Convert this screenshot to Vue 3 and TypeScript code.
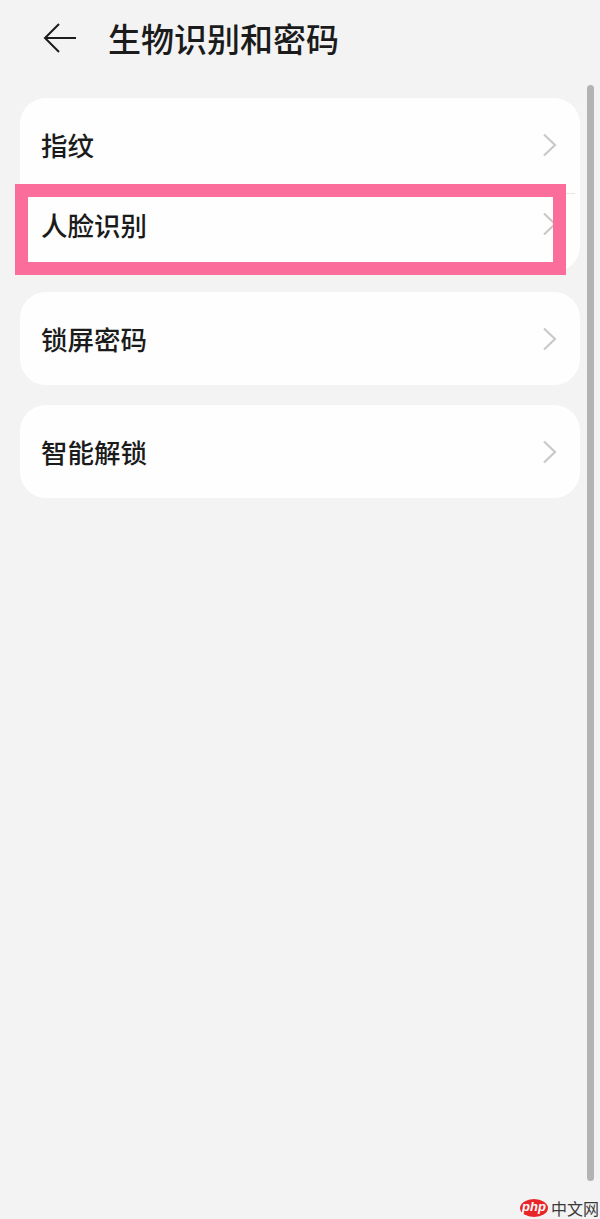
<script setup lang="ts">
const groups: string[][] = [['指纹', '人脸识别'], ['锁屏密码'], ['智能解锁']]
</script>

<template>
  <div class="screen">
    <header class="header">
      <svg class="back" width="36" height="32" viewBox="0 0 36 32" fill="none">
        <path d="M34 16H3M17 2 3 16l14 14" stroke="#1c1c1c" stroke-width="2" />
      </svg>
      <h1 class="title">生物识别和密码</h1>
    </header>

    <main class="list">
      <section v-for="(group, i) in groups" :key="i" class="card">
        <div v-for="label in group" :key="label" class="row">
          <span class="label">{{ label }}</span>
          <svg class="chevron" width="16" height="24" viewBox="0 0 16 24" fill="none">
            <path d="M2 1.5 13 12 2 22.5" stroke="#c9c9c9" stroke-width="2.2" />
          </svg>
        </div>
      </section>
    </main>

    <div class="highlight"></div>
    <div class="scrollbar"></div>

    <div class="watermark">
      <span class="php">php</span>
      <span class="cn">中文网</span>
    </div>
  </div>
</template>

<style scoped>
.screen {
  position: relative;
  width: 600px;
  height: 1219px;
  overflow: hidden;
  background: #f3f3f3;
  font-family: "Noto Sans CJK SC", "Noto Sans", sans-serif;
  color: #1b1b1b;
}

.header {
  display: flex;
  align-items: center;
  height: 76px;
  padding-left: 42px;
  gap: 30px;
}

.back {
  display: block;
}

.title {
  margin: 0;
  font-size: 33px;
  line-height: 76px;
  font-weight: 500;
}

.list {
  display: flex;
  flex-direction: column;
  gap: 20px;
  margin: 22px 20px 0;
}

.card {
  background: #fefefe;
  border-radius: 26px;
}

.row {
  display: flex;
  align-items: center;
  justify-content: space-between;
  box-sizing: border-box;
  height: 93px;
  padding: 0 22px 0 21px;
}

.row:has(+ .row) {
  height: 95px;
  padding-bottom: 2px;
}

.row + .row {
  height: 79px;
  margin: 0 5px;
  padding: 0 17px 18px 16px;
  border-top: 1px solid #e6e6e6;
}

.label {
  font-size: 26.5px;
  font-weight: 500;
}

.highlight {
  position: absolute;
  left: 15px;
  top: 184px;
  width: 525px;
  height: 65px;
  border: 13px solid #fb6e9b;
}

.scrollbar {
  position: absolute;
  left: 587px;
  top: 85px;
  width: 7px;
  height: 1096px;
  border-radius: 4px;
  background: #b3b3b3;
}

.watermark {
  position: absolute;
  left: 520px;
  top: 1199px;
  display: flex;
  align-items: center;
  gap: 3px;
}

.php {
  width: 28px;
  height: 18px;
  border-radius: 50%;
  background: #e8262a;
  color: #fff;
  font-family: "Liberation Sans", sans-serif;
  font-size: 13px;
  font-weight: 700;
  font-style: italic;
  line-height: 16px;
  text-align: center;
}

.cn {
  font-size: 16px;
  line-height: 18px;
  color: #3a3a3a;
}
</style>
